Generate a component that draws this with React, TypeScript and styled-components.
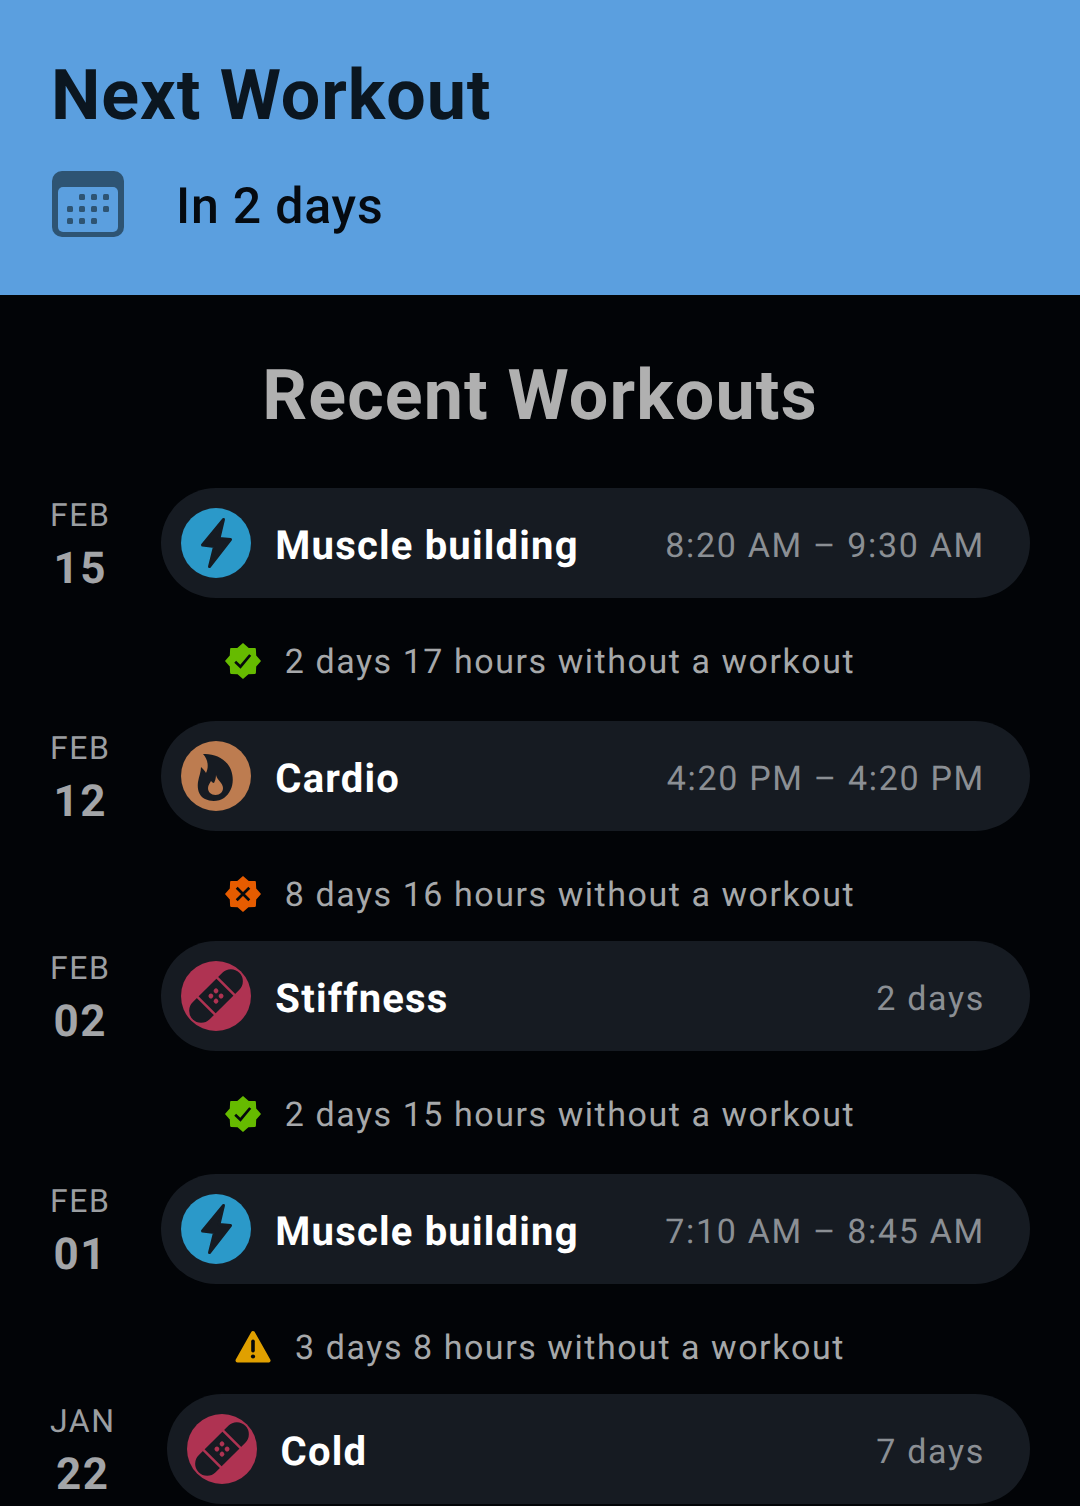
import React from 'react';
import styled, { createGlobalStyle } from 'styled-components';

const GlobalStyle = createGlobalStyle`
  html, body {
    margin: 0;
    padding: 0;
    background: #020407;
    font-family: Roboto, "Liberation Sans", sans-serif;
    text-rendering: geometricPrecision;
  }
`;

const Page = styled.div`
  width: 1080px;
  height: 1506px;
  overflow: hidden;
`;

const Header = styled.header`
  height: 295px;
  box-sizing: border-box;
  padding: 58px 52px 0;
  background: #5b9fdf;
`;

const NextTitle = styled.h1`
  margin: 0 0 0 -1px;
  font-size: 70px;
  line-height: 76px;
  font-weight: 700;
  color: #0b1620;
  letter-spacing: 0.95px;
`;

const NextRow = styled.div`
  display: flex;
  align-items: center;
  gap: 52px;
  margin-top: 34px;
`;

const NextLabel = styled.span`
  padding-top: 6px;
  font-size: 50px;
  line-height: 66px;
  font-weight: 500;
  color: #050a10;
  letter-spacing: 0.8px;
`;

const RecentTitle = styled.h2`
  margin: 0;
  padding-top: 63px;
  height: 193px;
  box-sizing: border-box;
  text-align: center;
  font-size: 70px;
  line-height: 76px;
  font-weight: 700;
  color: #b0b0b0;
  letter-spacing: 1.15px;
`;

const Row = styled.div`
  display: flex;
  align-items: center;
  gap: 51px;
  padding: 0 50px;
`;

const DateBox = styled.div`
  display: flex;
  flex-direction: column;
  align-items: center;
  padding-top: 3px;
  color: #9b9ea1;
`;

const Month = styled.span`
  font-size: 32px;
  line-height: 40px;
  letter-spacing: 1.5px;
`;

const Day = styled.span`
  margin-top: 7px;
  font-size: 44px;
  line-height: 52px;
  font-weight: 700;
  letter-spacing: 1.5px;
  color: #a3a5a8;
`;

const Pill = styled.div`
  flex: 1;
  height: 110px;
  box-sizing: border-box;
  display: flex;
  align-items: center;
  gap: 24px;
  padding: 0 45px 0 20px;
  border-radius: 55px;
  background: #161b22;
`;

const IconCircle = styled.div<{ $bg: string }>`
  width: 70px;
  height: 70px;
  flex: none;
  border-radius: 50%;
  background: ${({ $bg }) => $bg};
  display: flex;
  align-items: center;
  justify-content: center;
`;

const WorkoutName = styled.span`
  flex: 1;
  padding-top: 4px;
  font-size: 40px;
  font-weight: 700;
  color: #fff;
  letter-spacing: 1.2px;
`;

const WorkoutTime = styled.span`
  padding-top: 6px;
  font-size: 34px;
  color: #8b8f94;
  letter-spacing: 1.7px;
`;

const Note = styled.div<{ $tall: boolean }>`
  height: ${({ $tall }) => ($tall ? 123 : 110)}px;
  box-sizing: border-box;
  padding-top: 41px;
  display: flex;
  justify-content: center;
  align-items: flex-start;
  gap: 24px;
`;

const NoteIcon = styled.div`
  height: 44px;
  display: flex;
  align-items: center;
`;

const NoteText = styled.span`
  padding-top: 1px;
  font-size: 34px;
  line-height: 44px;
  color: #a6a8aa;
  letter-spacing: 1.55px;
`;

const dark = '#161b22';
const iconInk = '#05090c';

const Calendar = () => (
  <svg width="72" height="66" viewBox="0 0 72 66">
    <rect width="72" height="66" rx="10" fill="#2e5473" />
    <rect x="6" y="16" width="60" height="45" rx="5" fill="#5b9fdf" />
    {[
      [30, 26], [42, 26], [54, 26],
      [18, 38], [30, 38], [42, 38], [54, 38],
      [18, 50], [30, 50], [42, 50],
    ].map(([x, y]) => (
      <rect key={`${x}-${y}`} x={x - 3} y={y - 3} width="6" height="6" rx="1.5" fill="#2e5473" />
    ))}
  </svg>
);

const Bolt = () => (
  <svg width="70" height="70" viewBox="0 0 70 70">
    <path
      d="M42.5 11.5 L21.5 37 L33.5 38.5 L28.5 58.5 L49.5 31.5 L38 30.5 Z"
      fill={dark}
      stroke={dark}
      strokeWidth="3"
      strokeLinejoin="round"
    />
  </svg>
);

const Flame = () => (
  <svg width="70" height="70" viewBox="0 0 70 70">
    <path
      fillRule="evenodd"
      fill={dark}
      d="M22 13 C33 12 46 18 50 29 C54 40 51 51 43 57 C38 60.5 30 61 24 58 C18 55 16 48 17 41 C18 35 20 31 20 26 C22 28 24 30 25 32 C28 26 27 18 22 13 Z M35 34 C36 39 42 42 42 47 C42 51 39 54 34.5 54 C30 54 27 51 27 47 C27 44 29 42 30 40 C31 41 32 42 33 42 C34 40 35 37 35 34 Z"
    />
  </svg>
);

const Bandage = ({ bg }: { bg: string }) => (
  <svg width="70" height="70" viewBox="0 0 70 70">
    <g transform="rotate(-45 35 35)">
      <rect x="2" y="23" width="66" height="24" rx="12" fill={dark} />
      <rect x="20" y="21" width="2.5" height="28" fill={bg} />
      <rect x="47.5" y="21" width="2.5" height="28" fill={bg} />
      {[[31.4, 31.4], [38.6, 31.4], [31.4, 38.6], [38.6, 38.6]].map(([x, y]) => (
        <circle key={`${x}-${y}`} cx={x} cy={y} r="2.4" fill={bg} />
      ))}
    </g>
  </svg>
);

// eight soft scallops, one pointing straight up
const scallop = Array.from({ length: 16 }, (_, i) => {
  const r = i % 2 === 0 ? 11.3 : 8.9;
  const a = (i * Math.PI) / 8;
  return `${(12 + r * Math.sin(a)).toFixed(2)},${(12 - r * Math.cos(a)).toFixed(2)}`;
}).join(' ');

const Badge = ({ color, children }: { color: string; children: React.ReactNode }) => (
  <svg width="36" height="36" viewBox="0 0 24 24">
    <polygon points={scallop} fill={color} stroke={color} strokeWidth="1.2" strokeLinejoin="round" />
    {children}
  </svg>
);

const CheckBadge = () => (
  <Badge color="#66bb00">
    <path d="M6.8 12.5 L10.3 15.8 L16.8 8" fill="none" stroke={iconInk} strokeWidth="1.8" />
  </Badge>
);

const CrossBadge = () => (
  <Badge color="#e65c00">
    <path d="M7.8 7.8 L16.2 16.2 M16.2 7.8 L7.8 16.2" fill="none" stroke={iconInk} strokeWidth="1.8" />
  </Badge>
);

const WarnBadge = () => (
  <svg width="36" height="34" viewBox="0 0 36 34">
    <path d="M18 3 L33.5 30.5 L2.5 30.5 Z" fill="#e0a000" stroke="#e0a000" strokeWidth="4" strokeLinejoin="round" />
    <rect x="16.2" y="9.5" width="3.6" height="13" rx="1.8" fill={iconInk} />
    <circle cx="18" cy="26.5" r="2.1" fill={iconInk} />
  </svg>
);

type Kind = 'muscle' | 'cardio' | 'injury';

const kinds: Record<Kind, { bg: string; icon: React.ReactNode }> = {
  muscle: { bg: '#2b99c9', icon: <Bolt /> },
  cardio: { bg: '#bd7c50', icon: <Flame /> },
  injury: { bg: '#af3352', icon: <Bandage bg="#af3352" /> },
};

const entries: {
  month: string;
  day: string;
  kind: Kind;
  name: string;
  time: string;
  note?: { icon: React.ReactNode; text: string; tall: boolean };
}[] = [
  {
    month: 'FEB',
    day: '15',
    kind: 'muscle',
    name: 'Muscle building',
    time: '8:20 AM – 9:30 AM',
    note: { icon: <CheckBadge />, text: '2 days 17 hours without a workout', tall: true },
  },
  {
    month: 'FEB',
    day: '12',
    kind: 'cardio',
    name: 'Cardio',
    time: '4:20 PM – 4:20 PM',
    note: { icon: <CrossBadge />, text: '8 days 16 hours without a workout', tall: false },
  },
  {
    month: 'FEB',
    day: '02',
    kind: 'injury',
    name: 'Stiffness',
    time: '2 days',
    note: { icon: <CheckBadge />, text: '2 days 15 hours without a workout', tall: true },
  },
  {
    month: 'FEB',
    day: '01',
    kind: 'muscle',
    name: 'Muscle building',
    time: '7:10 AM – 8:45 AM',
    note: { icon: <WarnBadge />, text: '3 days 8 hours without a workout', tall: false },
  },
  { month: 'JAN', day: '22', kind: 'injury', name: 'Cold', time: '7 days' },
];

export default function App() {
  return (
    <Page>
      <GlobalStyle />
      <Header>
        <NextTitle>Next Workout</NextTitle>
        <NextRow>
          <Calendar />
          <NextLabel>In 2 days</NextLabel>
        </NextRow>
      </Header>
      <RecentTitle>Recent Workouts</RecentTitle>
      {entries.map((e) => (
        <React.Fragment key={e.month + e.day}>
          <Row>
            <DateBox>
              <Month>{e.month}</Month>
              <Day>{e.day}</Day>
            </DateBox>
            <Pill>
              <IconCircle $bg={kinds[e.kind].bg}>{kinds[e.kind].icon}</IconCircle>
              <WorkoutName>{e.name}</WorkoutName>
              <WorkoutTime>{e.time}</WorkoutTime>
            </Pill>
          </Row>
          {e.note && (
            <Note $tall={e.note.tall}>
              <NoteIcon>{e.note.icon}</NoteIcon>
              <NoteText>{e.note.text}</NoteText>
            </Note>
          )}
        </React.Fragment>
      ))}
    </Page>
  );
}
